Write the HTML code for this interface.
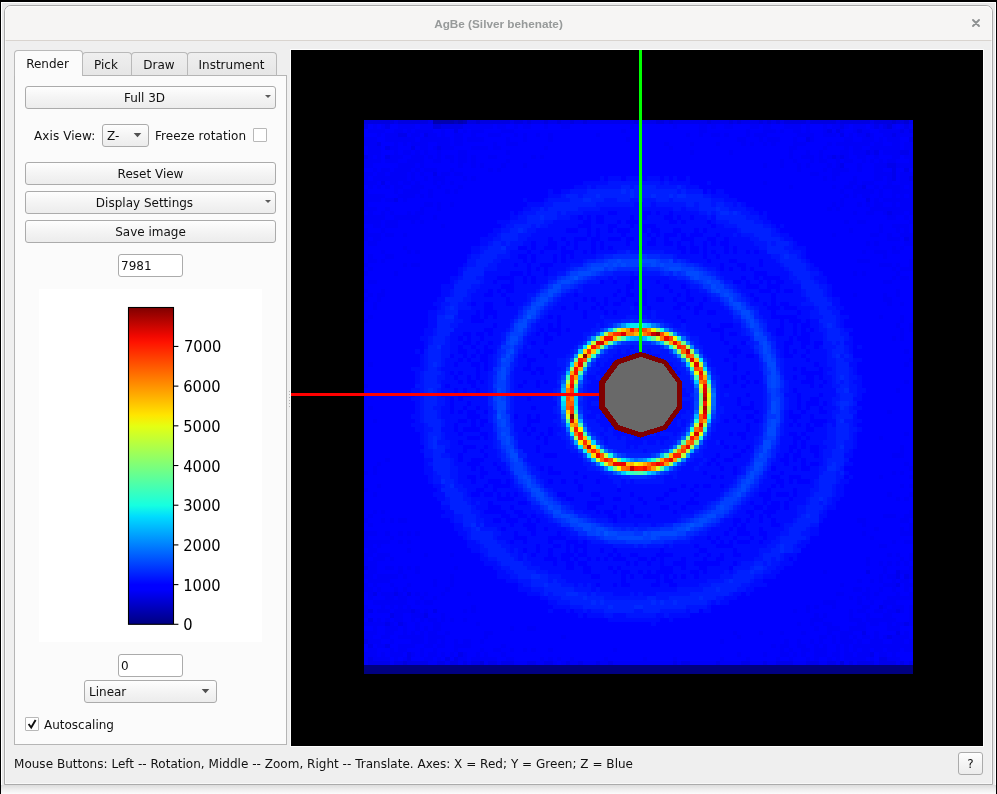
<!DOCTYPE html>
<html>
<head>
<meta charset="utf-8">
<title>AgBe (Silver behenate)</title>
<style>
html,body{margin:0;padding:0;}
body{width:997px;height:794px;position:relative;overflow:hidden;background:#f4f4f4;font-family:"DejaVu Sans","Liberation Sans",sans-serif;font-size:12px;color:#111;}
.abs{position:absolute;box-sizing:border-box;}
#desk-top{left:0;top:0;width:997px;height:2px;background:#000;}
#desk-left{left:0;top:0;width:1px;height:794px;background:#000;}
#desk-right{left:996px;top:0;width:1px;height:794px;background:#000;}
#behind{left:1px;top:2px;width:995px;height:783px;background:#e9e9e9;border:1px solid #fff;border-bottom:none;}
#shadow{left:1px;top:785px;width:995px;height:9px;background:linear-gradient(#dcdcdc,#f0f0f0 55%,#fbfbfb);}
#win{left:4px;top:5px;width:989px;height:780px;background:#efefef;border:1px solid #ababab;border-radius:7px 7px 0 0;overflow:hidden;}
#winhl{left:5px;top:6px;width:987px;height:778px;border:1px solid rgba(255,255,255,0.55);border-radius:6px 6px 0 0;}
#titlebar{left:0;top:0;width:987px;height:35px;background:#f6f5f4;border-bottom:1px solid #d9d4cf;}
#title{left:0;top:0px;width:987px;height:35px;line-height:35px;text-align:center;font-family:"Liberation Sans","DejaVu Sans",sans-serif;font-weight:bold;font-size:11.75px;color:#979a9a;}
.btn{border:1px solid #ababab;border-radius:3px;background:linear-gradient(#fefefe,#f4f4f4 50%,#ececec);text-align:center;line-height:23px;height:23px;}
.tab{border:1px solid #b9b9b9;border-bottom:none;border-radius:4px 4px 0 0;background:linear-gradient(#efefef,#e6e6e6);text-align:center;}
.edit{border:1px solid #ababab;border-radius:3px;background:#fff;line-height:23px;padding-left:2px;}

.chk{border:1px solid #b8b8b8;background:#fff;border-radius:1px;}
</style>
</head>
<body>
<div id="root" style="position:absolute;left:0;top:0;width:997px;height:794px;will-change:transform;">
<div class="abs" id="behind"></div>
<div class="abs" id="shadow"></div>
<div class="abs" id="desk-top"></div>
<div class="abs" id="desk-left"></div>
<div class="abs" id="desk-right"></div>

<div class="abs" id="win">
  <div class="abs" id="titlebar"></div>
  <div class="abs" id="title">AgBe (Silver behenate)</div>
  <svg class="abs" style="left:966px;top:12px" width="10" height="10" viewBox="0 0 10 10"><path d="M2 2L8 8M8 2L2 8" stroke="#8d9091" stroke-width="1.9" stroke-linecap="round" fill="none"/></svg>
</div>

<div class="abs" id="winhl"></div>
<!-- Left panel (page coordinates) -->
<div class="abs" id="pane" style="left:14px;top:75px;width:273px;height:670px;background:#fbfbfb;border:1px solid #b5b5b5;"></div>
<div class="abs tab" style="left:82px;top:52px;width:50px;height:24px;line-height:25px;text-indent:-2px;border-bottom:1px solid #b5b5b5;">Pick</div>
<div class="abs tab" style="left:131px;top:52px;width:57px;height:24px;line-height:25px;text-indent:-1px;border-bottom:1px solid #b5b5b5;">Draw</div>
<div class="abs tab" style="left:187px;top:52px;width:90px;height:24px;line-height:25px;text-indent:-1px;border-bottom:1px solid #b5b5b5;">Instrument</div>
<div class="abs tab" style="left:14px;top:50px;width:69px;height:26px;line-height:27px;text-indent:-2px;background:#fbfbfb;">Render</div>

<div class="abs btn" style="left:25px;top:86px;width:251px;"><span style="position:relative;left:-6px">Full 3D</span></div>
<svg class="abs" style="left:264px;top:94px" width="8" height="5"><polygon points="1,1 7,1 4,4" fill="#5a5a5a"/></svg>

<div class="abs" style="left:34px;top:128px;line-height:16px;letter-spacing:0.09px;">Axis View:</div>
<div class="abs btn" style="left:102px;top:124px;width:47px;text-align:left;padding-left:4px;">Z-</div>
<svg class="abs" style="left:132px;top:132px" width="10" height="7"><polygon points="1.7,1 9.3,1 5.5,5.2" fill="#505050"/></svg>
<div class="abs" style="left:155px;top:128px;line-height:16px;letter-spacing:0.08px;">Freeze rotation</div>
<div class="abs chk" style="left:253px;top:128px;width:14px;height:14px;"></div>

<div class="abs btn" style="left:25px;top:162px;width:251px;">Reset View</div>
<div class="abs btn" style="left:25px;top:191px;width:251px;"><span style="position:relative;left:-6px">Display Settings</span></div>
<svg class="abs" style="left:264px;top:199px" width="8" height="5"><polygon points="1,1 7,1 4,4" fill="#5a5a5a"/></svg>
<div class="abs btn" style="left:25px;top:220px;width:251px;">Save image</div>

<div class="abs edit" style="left:118px;top:254px;width:65px;height:23px;">7981</div>

<!-- colour bar canvas -->
<div class="abs" style="left:39px;top:289px;width:223px;height:353px;background:#fff;"></div>
<svg class="abs" style="left:39px;top:289px;" width="223" height="353" viewBox="0 0 223 353">
  <defs>
    <linearGradient id="jet" x1="0" y1="1" x2="0" y2="0">
      <stop offset="0" stop-color="#000080"/>
      <stop offset="0.11" stop-color="#0000ff"/>
      <stop offset="0.125" stop-color="#0000ff"/>
      <stop offset="0.34" stop-color="#00dcfe"/>
      <stop offset="0.375" stop-color="#16ffe1"/>
      <stop offset="0.5" stop-color="#7dff7a"/>
      <stop offset="0.625" stop-color="#e4ff13"/>
      <stop offset="0.66" stop-color="#ffe600"/>
      <stop offset="0.89" stop-color="#ff1300"/>
      <stop offset="0.91" stop-color="#f10800"/>
      <stop offset="1" stop-color="#800000"/>
    </linearGradient>
  </defs>
  <rect x="89.5" y="18.5" width="45" height="316.8" fill="url(#jet)" stroke="#000" stroke-width="1.1"/>
  <g stroke="#000" stroke-width="1.1">
    <line x1="135.0" x2="139.4" y1="335.30" y2="335.30"/>
    <line x1="135.0" x2="139.4" y1="295.61" y2="295.61"/>
    <line x1="135.0" x2="139.4" y1="255.91" y2="255.91"/>
    <line x1="135.0" x2="139.4" y1="216.22" y2="216.22"/>
    <line x1="135.0" x2="139.4" y1="176.52" y2="176.52"/>
    <line x1="135.0" x2="139.4" y1="136.83" y2="136.83"/>
    <line x1="135.0" x2="139.4" y1="97.13" y2="97.13"/>
    <line x1="135.0" x2="139.4" y1="57.44" y2="57.44"/>
  </g>
  <g font-family="DejaVu Sans, Liberation Sans, sans-serif" font-size="14.7" fill="#000">
    <text transform="translate(144.2 341.30) scale(1 1.12)">0</text>
    <text transform="translate(144.2 301.61) scale(1 1.12)">1000</text>
    <text transform="translate(144.2 261.91) scale(1 1.12)">2000</text>
    <text transform="translate(144.2 222.22) scale(1 1.12)">3000</text>
    <text transform="translate(144.2 182.52) scale(1 1.12)">4000</text>
    <text transform="translate(144.2 142.83) scale(1 1.12)">5000</text>
    <text transform="translate(144.2 103.13) scale(1 1.12)">6000</text>
    <text transform="translate(145.0 63.44) scale(1 1.12)">7000</text>
  </g>
</svg>

<div class="abs edit" style="left:118px;top:654px;width:65px;height:23px;">0</div>
<div class="abs btn" style="left:84px;top:680px;width:133px;text-align:left;padding-left:4px;">Linear</div>
<svg class="abs" style="left:200px;top:688px" width="10" height="7"><polygon points="1.7,1 9.3,1 5.5,5.2" fill="#505050"/></svg>
<div class="abs chk" style="left:25px;top:717px;width:14px;height:14px;"></div>
<svg class="abs" style="left:25px;top:717px" width="14" height="14" viewBox="0 0 14 14"><path d="M3.6 7.0L6.2 10.6L10.6 3.0" stroke="#111" stroke-width="1.9" fill="none"/></svg>
<div class="abs" style="left:44px;top:717px;line-height:16px;">Autoscaling</div>

<!-- splitter handle -->
<div class="abs" style="left:289px;top:391px;width:1px;height:1px;background:#b4b4b4;"></div><div class="abs" style="left:289px;top:394px;width:1px;height:1px;background:#b4b4b4;"></div><div class="abs" style="left:289px;top:397px;width:1px;height:1px;background:#b4b4b4;"></div><div class="abs" style="left:289px;top:400px;width:1px;height:1px;background:#b4b4b4;"></div><div class="abs" style="left:289px;top:403px;width:1px;height:1px;background:#b4b4b4;"></div><div class="abs" style="left:289px;top:406px;width:1px;height:1px;background:#b4b4b4;"></div>
<!-- GL view -->
<div class="abs" style="left:290px;top:49px;width:694px;height:698px;background:#fdfdfd;"></div>
<div class="abs" id="gl" style="left:291px;top:50px;width:692px;height:696px;background:#000;"></div>
<svg class="abs" id="glsvg" style="left:291px;top:50px;" width="692" height="696" viewBox="291 50 692 696">
  <!--DATA-->
<rect x="364" y="120" width="549" height="554" fill="#0000ff"/>
<g transform="translate(364 120) scale(4.289062 4.328125) translate(0 0.5)" fill="none" stroke-width="1" shape-rendering="crispEdges">
<path stroke="#000080" d="M0 126h128M0 127h128"/>
<path stroke="#0000b0" d="M16 0h5M22 0h1"/>
<path stroke="#0000bc" d="M21 0h1M23 0h1"/>
<path stroke="#0000d4" d="M26 0h1M123 0h1M126 0h1"/>
<path stroke="#0000e0" d="M0 0h7M8 0h7M24 0h2M27 0h7M35 0h2M38 0h1M42 0h1M45 0h1M48 0h1M51 0h1M63 0h1M68 0h2M71 0h1M80 0h1M85 0h1M87 0h1M92 0h1M94 0h1M96 0h1M98 0h5M104 0h6M111 0h7M119 0h4M124 0h2M16 1h2M122 1h1M9 125h1M27 125h1M111 125h1"/>
<path stroke="#0000ec" d="M7 0h1M15 0h1M34 0h1M37 0h1M39 0h3M43 0h2M46 0h2M49 0h2M52 0h11M64 0h4M70 0h1M72 0h8M81 0h4M86 0h1M88 0h4M93 0h1M95 0h1M97 0h1M103 0h1M110 0h1M118 0h1M127 0h1M0 1h1M5 1h1M18 1h5M111 1h1M119 1h1M121 1h1M126 1h1M21 2h1M108 2h1M110 2h1M115 2h1M125 2h1M127 2h1M8 3h2M14 3h1M111 3h1M117 3h1M123 3h1M103 4h1M127 4h1M3 5h1M5 6h1M11 6h1M17 6h1M117 7h1M119 7h1M125 7h2M0 8h1M5 8h1M109 8h1M111 8h1M111 10h1M122 10h2M123 11h1M126 11h1M16 12h1M123 12h1M123 13h1M127 13h1M4 14h1M116 15h1M7 18h1M117 18h1M122 21h1M126 27h1M0 103h1M117 104h1M124 104h1M124 105h1M126 105h1M124 107h1M2 109h1M7 109h1M10 109h1M120 112h1M1 113h1M11 113h1M16 113h1M124 113h1M6 114h1M14 114h1M1 115h1M5 116h1M8 116h1M126 116h1M116 118h1M124 118h1M122 119h1M0 120h1M1 121h1M5 121h1M10 123h1M22 123h1M118 123h1M1 124h1M10 124h1M19 124h1M21 124h1M120 124h2M1 125h5M7 125h2M10 125h5M17 125h2M20 125h2M23 125h1M25 125h2M29 125h2M32 125h3M38 125h2M42 125h2M47 125h1M50 125h1M54 125h1M57 125h1M72 125h1M74 125h2M82 125h1M88 125h2M93 125h1M96 125h4M103 125h3M108 125h2M113 125h1M115 125h4M120 125h4M125 125h1M127 125h1"/>
<path stroke="#0000f8" d="M2 1h1M4 1h1M8 1h4M13 1h3M23 1h7M31 1h2M35 1h1M37 1h2M42 1h1M46 1h2M62 1h1M72 1h1M78 1h2M81 1h1M84 1h2M90 1h2M93 1h2M98 1h4M103 1h1M107 1h1M109 1h2M112 1h1M114 1h3M118 1h1M120 1h1M123 1h1M125 1h1M127 1h1M1 2h4M7 2h2M10 2h1M12 2h4M18 2h1M23 2h1M25 2h3M32 2h3M60 2h1M78 2h2M89 2h1M93 2h3M97 2h1M100 2h2M103 2h1M107 2h1M111 2h1M114 2h1M116 2h2M120 2h5M126 2h1M3 3h1M5 3h3M11 3h2M15 3h2M18 3h1M21 3h2M25 3h1M29 3h3M35 3h1M37 3h1M40 3h1M43 3h1M54 3h1M75 3h1M78 3h1M81 3h2M84 3h1M89 3h1M91 3h3M101 3h4M107 3h3M113 3h1M115 3h2M118 3h1M121 3h2M124 3h4M0 4h3M5 4h7M13 4h7M21 4h2M24 4h4M33 4h1M37 4h1M43 4h1M61 4h1M87 4h2M92 4h1M94 4h3M100 4h1M104 4h1M112 4h2M116 4h3M120 4h1M122 4h3M0 5h3M7 5h1M9 5h1M11 5h4M17 5h3M21 5h2M30 5h1M33 5h3M70 5h1M76 5h1M82 5h1M88 5h1M90 5h1M93 5h1M95 5h1M100 5h3M108 5h1M110 5h8M119 5h2M123 5h2M126 5h2M1 6h3M6 6h2M13 6h2M16 6h1M18 6h3M25 6h4M30 6h2M42 6h1M71 6h1M99 6h2M107 6h1M112 6h1M114 6h2M118 6h7M126 6h2M1 7h3M7 7h1M9 7h2M12 7h1M14 7h1M17 7h1M22 7h2M33 7h1M76 7h1M85 7h1M99 7h1M103 7h1M106 7h1M111 7h2M114 7h3M118 7h1M121 7h4M127 7h1M1 8h1M3 8h1M6 8h3M11 8h3M15 8h1M17 8h1M19 8h2M22 8h2M25 8h1M29 8h2M39 8h1M41 8h1M99 8h1M102 8h3M106 8h1M108 8h1M110 8h1M112 8h1M115 8h2M119 8h1M123 8h2M126 8h2M0 9h4M5 9h3M10 9h4M16 9h2M20 9h1M22 9h2M25 9h1M33 9h1M97 9h1M100 9h1M104 9h1M106 9h2M110 9h1M112 9h2M116 9h1M118 9h1M120 9h1M122 9h2M127 9h1M0 10h2M8 10h4M13 10h1M22 10h1M25 10h1M27 10h1M32 10h1M37 10h1M93 10h1M97 10h1M101 10h1M103 10h1M108 10h1M110 10h1M115 10h1M119 10h3M124 10h4M2 11h1M4 11h2M7 11h4M12 11h1M14 11h3M20 11h1M29 11h1M31 11h1M101 11h1M107 11h1M109 11h4M115 11h1M119 11h2M0 12h2M3 12h2M6 12h4M11 12h1M13 12h1M18 12h2M21 12h2M104 12h2M109 12h2M119 12h4M125 12h3M0 13h1M2 13h8M11 13h1M14 13h1M16 13h3M23 13h1M25 13h1M107 13h1M109 13h1M114 13h1M119 13h2M122 13h1M125 13h2M0 14h3M6 14h2M9 14h2M12 14h1M16 14h1M18 14h1M20 14h1M93 14h1M113 14h2M116 14h3M122 14h1M125 14h3M1 15h1M3 15h1M5 15h1M7 15h2M11 15h3M17 15h1M22 15h1M99 15h1M109 15h1M112 15h2M115 15h1M119 15h1M121 15h5M127 15h1M0 16h1M7 16h1M9 16h4M15 16h1M19 16h1M21 16h1M111 16h1M114 16h5M120 16h1M123 16h5M0 17h5M8 17h4M13 17h1M15 17h1M112 17h1M114 17h1M116 17h2M120 17h1M123 17h1M125 17h1M127 17h1M0 18h4M5 18h2M9 18h1M111 18h1M119 18h1M121 18h7M0 19h1M14 19h2M17 19h1M20 19h1M109 19h1M111 19h1M115 19h1M117 19h1M119 19h2M123 19h1M125 19h3M0 20h3M5 20h1M13 20h1M17 20h1M108 20h1M110 20h1M118 20h10M1 21h1M4 21h1M6 21h1M10 21h1M12 21h2M114 21h1M117 21h2M121 21h1M123 21h3M127 21h1M0 22h5M7 22h6M16 22h1M122 22h2M126 22h1M0 23h4M5 23h3M11 23h1M13 23h1M112 23h1M115 23h2M127 23h1M2 24h2M5 24h3M18 24h1M120 24h1M123 24h4M0 25h1M4 25h1M113 25h1M120 25h1M124 25h1M126 25h1M0 26h4M5 26h2M9 26h1M109 26h1M118 26h2M122 26h1M125 26h3M0 27h1M2 27h2M122 27h3M127 27h1M1 28h2M117 28h1M119 28h1M126 28h2M9 29h1M123 29h1M125 29h1M4 30h1M10 30h1M12 30h1M116 30h1M119 30h3M123 30h2M1 31h1M5 31h2M121 31h1M1 32h2M4 32h1M115 32h3M127 32h1M0 33h1M9 33h1M11 33h2M120 33h3M124 33h1M127 33h1M1 34h1M123 34h1M125 34h3M0 35h1M7 35h1M114 35h1M116 35h1M124 35h1M123 36h1M125 36h2M1 37h2M121 37h2M0 39h1M4 39h1M124 39h1M1 40h1M3 40h2M114 40h1M121 40h1M124 40h1M0 41h1M3 41h1M121 41h2M2 42h1M122 42h1M125 42h1M2 43h1M1 45h1M120 45h1M125 45h1M0 46h1M125 46h1M124 47h1M127 47h1M125 48h1M127 48h1M125 49h1M123 50h1M125 50h1M126 53h1M127 55h1M1 56h1M126 56h1M126 60h1M0 61h1M124 62h1M1 66h1M122 67h1M2 69h1M126 72h1M120 73h1M125 75h1M125 76h1M123 77h3M5 78h1M3 79h1M126 79h1M2 80h1M127 80h1M0 81h1M2 81h1M123 81h1M125 81h1M120 82h1M127 82h1M3 84h1M125 84h1M127 84h1M0 85h1M2 86h1M122 86h1M127 86h1M124 87h1M126 87h1M2 90h1M4 90h1M127 90h1M1 91h1M121 91h3M126 91h2M0 92h1M4 92h1M6 92h1M8 92h2M115 92h2M125 92h2M1 93h1M116 93h1M127 93h1M119 94h1M125 94h1M127 94h1M0 95h3M5 95h1M8 95h1M10 95h1M12 95h1M116 95h1M125 95h3M0 96h1M6 96h1M118 96h1M0 97h6M8 97h1M10 97h1M123 97h1M126 97h2M0 98h2M3 98h1M120 98h2M1 99h2M10 99h1M0 100h2M3 100h3M14 100h1M20 100h1M122 100h1M124 100h1M127 100h1M0 101h1M2 101h3M6 101h1M117 101h1M125 101h1M127 101h1M0 102h3M117 102h1M120 102h1M122 102h1M124 102h1M126 102h1M1 103h2M5 103h2M8 103h1M10 103h1M12 103h1M21 103h1M121 103h1M127 103h1M1 104h2M8 104h1M12 104h1M107 104h1M121 104h1M125 104h3M0 105h2M3 105h5M9 105h1M20 105h1M120 105h1M122 105h2M127 105h1M1 106h5M16 106h1M20 106h1M115 106h1M118 106h1M120 106h1M123 106h1M125 106h2M0 107h1M2 107h1M6 107h1M10 107h1M16 107h1M20 107h1M111 107h1M121 107h3M126 107h2M0 108h2M3 108h1M7 108h1M9 108h1M19 108h1M114 108h2M117 108h1M120 108h1M123 108h1M126 108h1M1 109h1M4 109h3M8 109h1M12 109h1M14 109h1M18 109h1M24 109h1M110 109h2M116 109h2M119 109h1M124 109h1M127 109h1M1 110h1M5 110h2M8 110h2M13 110h1M16 110h1M113 110h1M115 110h1M117 110h1M122 110h6M2 111h8M12 111h1M14 111h2M107 111h3M115 111h1M118 111h1M121 111h3M0 112h1M4 112h1M6 112h1M8 112h1M10 112h1M25 112h1M103 112h1M105 112h1M109 112h1M116 112h2M121 112h1M123 112h3M127 112h1M0 113h1M3 113h3M7 113h4M12 113h1M14 113h1M23 113h1M25 113h1M100 113h1M103 113h1M113 113h1M115 113h2M119 113h2M122 113h2M125 113h1M127 113h1M0 114h1M7 114h2M11 114h3M18 114h1M105 114h1M107 114h1M113 114h1M117 114h1M121 114h2M127 114h1M3 115h1M5 115h1M7 115h2M11 115h1M13 115h1M15 115h2M18 115h1M20 115h1M23 115h1M104 115h3M113 115h3M117 115h7M127 115h1M0 116h5M6 116h1M9 116h1M12 116h1M16 116h2M26 116h1M101 116h1M104 116h1M107 116h2M115 116h2M118 116h2M122 116h1M124 116h2M127 116h1M2 117h1M5 117h3M9 117h1M12 117h1M14 117h1M16 117h2M34 117h1M38 117h2M105 117h1M108 117h3M113 117h4M122 117h3M0 118h3M5 118h2M9 118h1M11 118h1M13 118h1M15 118h2M19 118h1M28 118h2M86 118h1M92 118h1M97 118h1M102 118h1M108 118h1M111 118h3M119 118h1M126 118h1M0 119h2M4 119h2M8 119h6M15 119h4M28 119h1M46 119h1M87 119h1M106 119h2M109 119h1M111 119h2M114 119h1M116 119h2M119 119h1M121 119h1M123 119h4M1 120h3M6 120h1M11 120h3M15 120h2M18 120h1M21 120h1M23 120h2M27 120h1M83 120h1M98 120h1M101 120h1M104 120h1M106 120h1M109 120h1M111 120h3M115 120h1M118 120h3M123 120h3M127 120h1M3 121h2M8 121h4M14 121h2M17 121h2M21 121h4M32 121h1M95 121h1M97 121h2M101 121h2M105 121h1M107 121h1M110 121h1M112 121h1M114 121h14M1 122h2M6 122h1M8 122h2M13 122h1M16 122h1M21 122h1M27 122h1M30 122h2M34 122h1M37 122h1M39 122h1M43 122h1M58 122h1M97 122h1M99 122h1M102 122h2M105 122h3M110 122h1M112 122h1M114 122h1M116 122h2M119 122h2M122 122h3M126 122h2M0 123h3M4 123h1M6 123h3M11 123h1M13 123h1M15 123h2M18 123h1M20 123h1M23 123h1M26 123h1M28 123h1M32 123h1M87 123h1M93 123h1M97 123h2M100 123h1M102 123h1M105 123h3M109 123h2M112 123h2M115 123h3M120 123h2M123 123h1M0 124h1M2 124h4M7 124h1M9 124h1M14 124h2M17 124h1M22 124h2M25 124h6M33 124h2M41 124h1M43 124h1M45 124h1M48 124h1M56 124h1M65 124h1M72 124h1M83 124h1M89 124h1M96 124h1M99 124h1M103 124h1M105 124h1M108 124h1M110 124h1M112 124h5M118 124h1M122 124h3M0 125h1M6 125h1M15 125h2M19 125h1M22 125h1M24 125h1M28 125h1M31 125h1M35 125h3M40 125h2M44 125h1M46 125h1M48 125h2M51 125h3M55 125h2M58 125h14M73 125h1M76 125h6M83 125h5M90 125h3M94 125h2M100 125h3M106 125h2M110 125h1M112 125h1M114 125h1M119 125h1M124 125h1M126 125h1"/>
<path stroke="#000bff" d="M55 13h1M57 13h3M61 13h4M66 13h3M70 13h1M72 13h1M75 13h1M51 14h6M69 14h1M71 14h5M80 14h1M49 15h3M53 15h1M75 15h3M43 16h1M46 16h2M80 16h1M82 16h2M43 17h3M81 17h4M37 18h1M42 18h1M84 18h3M38 19h4M63 19h2M67 19h1M86 19h1M88 19h1M37 20h2M55 20h17M74 20h1M89 20h2M34 21h1M36 21h1M51 21h6M59 21h6M67 21h1M69 21h2M72 21h6M90 21h2M93 21h1M34 22h2M48 22h2M51 22h1M53 22h1M56 22h6M63 22h2M66 22h4M72 22h1M74 22h2M77 22h3M81 22h1M92 22h2M31 23h3M44 23h7M53 23h1M56 23h3M60 23h1M64 23h7M73 23h1M75 23h5M81 23h1M93 23h2M32 24h1M43 24h7M53 24h4M59 24h3M63 24h2M68 24h13M82 24h2M95 24h1M97 24h1M30 25h2M40 25h7M50 25h2M53 25h1M55 25h2M58 25h1M62 25h3M66 25h1M69 25h3M74 25h3M78 25h1M80 25h7M96 25h1M29 26h2M39 26h13M53 26h1M55 26h5M61 26h5M67 26h1M69 26h1M73 26h1M75 26h1M79 26h3M83 26h3M87 26h1M97 26h2M27 27h3M38 27h5M44 27h2M47 27h2M52 27h1M55 27h2M60 27h1M63 27h4M68 27h2M71 27h3M77 27h3M82 27h2M85 27h5M98 27h2M27 28h2M37 28h2M40 28h3M45 28h2M48 28h1M50 28h3M54 28h1M56 28h5M62 28h4M68 28h2M72 28h1M74 28h2M77 28h2M80 28h1M82 28h1M85 28h6M100 28h1M25 29h2M38 29h1M40 29h2M45 29h1M47 29h2M50 29h3M54 29h1M56 29h1M58 29h6M65 29h8M75 29h1M78 29h1M80 29h4M85 29h1M87 29h5M100 29h3M25 30h2M34 30h4M39 30h2M42 30h4M49 30h2M52 30h1M54 30h5M70 30h4M75 30h1M78 30h1M80 30h1M82 30h2M85 30h1M87 30h2M90 30h1M92 30h2M102 30h1M24 31h1M34 31h2M38 31h1M40 31h4M45 31h1M47 31h1M49 31h5M73 31h6M80 31h2M83 31h12M102 31h1M32 32h5M38 32h1M40 32h4M45 32h1M47 32h4M76 32h4M81 32h4M87 32h5M93 32h3M103 32h1M23 33h1M31 33h4M36 33h2M39 33h2M44 33h4M79 33h4M84 33h3M89 33h3M93 33h4M104 33h1M22 34h1M31 34h7M39 34h1M41 34h1M43 34h4M82 34h1M84 34h1M86 34h2M89 34h1M91 34h7M104 34h2M22 35h1M28 35h6M37 35h1M39 35h3M43 35h2M62 35h1M64 35h1M83 35h8M94 35h5M106 35h1M20 36h2M28 36h3M35 36h2M38 36h1M40 36h3M57 36h1M59 36h3M64 36h7M84 36h4M89 36h2M92 36h1M97 36h2M105 36h3M20 37h1M28 37h2M31 37h3M35 37h2M38 37h1M40 37h3M56 37h2M59 37h3M63 37h5M69 37h6M88 37h1M90 37h2M93 37h1M95 37h1M98 37h2M106 37h2M18 38h3M27 38h5M35 38h6M51 38h10M63 38h7M71 38h3M75 38h1M87 38h2M92 38h2M97 38h5M108 38h1M18 39h2M26 39h3M30 39h1M32 39h1M35 39h5M49 39h1M51 39h8M60 39h1M62 39h3M66 39h5M72 39h3M76 39h2M88 39h4M95 39h1M97 39h1M100 39h2M108 39h1M18 40h2M25 40h3M30 40h2M33 40h5M47 40h2M50 40h8M59 40h2M63 40h2M66 40h7M74 40h1M76 40h4M89 40h1M91 40h4M96 40h6M108 40h1M17 41h2M25 41h8M34 41h4M46 41h5M52 41h1M54 41h2M57 41h3M61 41h4M66 41h2M70 41h2M73 41h2M77 41h2M80 41h1M90 41h1M92 41h3M96 41h7M109 41h2M16 42h2M24 42h1M26 42h2M30 42h3M35 42h2M45 42h4M50 42h4M55 42h1M57 42h1M60 42h3M64 42h1M66 42h7M75 42h3M79 42h4M90 42h3M94 42h1M96 42h1M99 42h3M109 42h2M17 43h1M25 43h3M30 43h6M44 43h2M47 43h2M50 43h3M54 43h1M56 43h6M63 43h3M67 43h5M74 43h1M76 43h1M79 43h5M92 43h2M97 43h1M101 43h4M110 43h2M15 44h2M22 44h4M27 44h1M31 44h5M43 44h8M52 44h4M57 44h1M59 44h8M68 44h9M78 44h2M82 44h3M92 44h3M96 44h5M102 44h2M15 45h2M22 45h3M27 45h1M29 45h1M31 45h4M42 45h1M44 45h1M46 45h5M52 45h3M56 45h5M64 45h1M66 45h1M68 45h5M74 45h12M93 45h2M101 45h3M111 45h2M15 46h2M23 46h2M28 46h6M41 46h4M46 46h10M70 46h4M75 46h11M94 46h3M98 46h1M102 46h1M104 46h2M111 46h1M15 47h2M22 47h8M31 47h3M40 47h3M44 47h1M46 47h8M55 47h1M72 47h2M75 47h5M81 47h2M86 47h2M94 47h3M98 47h2M101 47h1M104 47h2M111 47h1M14 48h2M21 48h7M30 48h3M40 48h1M42 48h1M46 48h1M48 48h5M75 48h6M84 48h4M94 48h2M98 48h2M101 48h1M103 48h1M105 48h1M112 48h2M14 49h2M20 49h3M25 49h1M28 49h1M30 49h2M39 49h1M41 49h1M43 49h2M46 49h5M76 49h7M84 49h1M87 49h1M95 49h1M98 49h2M101 49h1M104 49h3M13 50h2M20 50h2M23 50h1M25 50h2M28 50h4M38 50h4M44 50h7M78 50h5M84 50h6M96 50h3M100 50h1M104 50h3M113 50h1M14 51h1M20 51h3M25 51h1M27 51h2M30 51h2M38 51h1M40 51h2M43 51h7M78 51h6M85 51h3M96 51h2M100 51h2M104 51h1M112 51h2M14 52h1M20 52h2M23 52h2M26 52h2M29 52h2M37 52h1M39 52h10M62 52h1M79 52h7M87 52h3M96 52h2M99 52h3M103 52h2M106 52h1M113 52h1M115 52h1M12 53h1M20 53h2M24 53h2M27 53h1M30 53h1M37 53h4M42 53h6M59 53h1M61 53h1M64 53h1M66 53h1M79 53h6M88 53h3M97 53h1M99 53h1M101 53h2M104 53h4M113 53h1M13 54h1M21 54h2M24 54h1M26 54h1M29 54h1M36 54h1M38 54h4M43 54h4M58 54h7M66 54h3M80 54h6M87 54h2M91 54h1M97 54h1M100 54h2M103 54h5M13 55h1M19 55h3M23 55h1M25 55h2M29 55h1M36 55h2M40 55h5M57 55h10M68 55h2M81 55h3M85 55h7M98 55h5M104 55h4M114 55h2M13 56h1M19 56h2M22 56h3M27 56h1M29 56h1M36 56h2M39 56h6M54 56h1M56 56h2M59 56h13M81 56h5M87 56h5M98 56h7M106 56h2M113 56h2M11 57h3M18 57h8M27 57h1M29 57h1M35 57h2M39 57h1M42 57h4M55 57h2M58 57h5M64 57h9M82 57h4M87 57h5M98 57h2M101 57h1M103 57h3M107 57h2M114 57h1M12 58h1M19 58h1M21 58h1M23 58h3M27 58h2M35 58h4M40 58h1M42 58h3M54 58h7M62 58h3M66 58h4M73 58h1M82 58h7M90 58h3M98 58h4M107 58h1M114 58h1M12 59h1M19 59h2M22 59h2M25 59h1M27 59h2M35 59h10M52 59h2M55 59h4M60 59h9M70 59h3M83 59h3M87 59h1M89 59h4M98 59h2M101 59h2M105 59h1M107 59h2M115 59h1M12 60h1M18 60h4M23 60h1M26 60h1M28 60h1M35 60h2M38 60h2M41 60h1M43 60h2M53 60h3M57 60h2M60 60h14M83 60h3M87 60h2M90 60h1M92 60h1M99 60h3M105 60h2M108 60h1M114 60h2M18 61h1M20 61h5M26 61h3M35 61h1M37 61h3M41 61h4M52 61h7M60 61h2M64 61h1M68 61h4M73 61h1M83 61h1M85 61h3M89 61h4M99 61h5M105 61h1M107 61h2M115 61h1M11 62h2M18 62h3M22 62h1M24 62h2M27 62h2M35 62h9M52 62h4M57 62h8M66 62h4M71 62h1M73 62h2M83 62h10M99 62h1M101 62h9M115 62h2M12 63h1M18 63h4M25 63h4M35 63h9M54 63h11M67 63h9M83 63h1M85 63h4M90 63h3M98 63h3M102 63h4M107 63h3M115 63h1M11 64h2M19 64h1M21 64h1M23 64h6M35 64h3M39 64h5M52 64h6M59 64h3M63 64h3M67 64h5M73 64h1M83 64h4M88 64h5M99 64h2M102 64h2M106 64h3M114 64h2M12 65h1M19 65h1M21 65h3M25 65h4M35 65h10M52 65h1M55 65h3M59 65h2M63 65h1M65 65h1M68 65h8M83 65h4M88 65h2M91 65h2M99 65h2M102 65h1M106 65h1M108 65h1M12 66h1M18 66h2M21 66h2M24 66h2M27 66h2M35 66h4M40 66h4M52 66h6M59 66h17M84 66h4M91 66h2M99 66h2M102 66h1M104 66h2M107 66h3M114 66h2M12 67h1M18 67h2M21 67h1M23 67h1M26 67h2M35 67h9M53 67h3M57 67h3M62 67h2M65 67h2M68 67h7M84 67h7M92 67h1M98 67h1M100 67h2M103 67h3M108 67h1M11 68h2M18 68h6M27 68h2M36 68h2M39 68h1M41 68h4M52 68h2M55 68h3M59 68h15M83 68h3M87 68h2M91 68h2M98 68h1M102 68h2M105 68h4M114 68h1M12 69h1M19 69h3M24 69h1M26 69h1M35 69h3M41 69h3M54 69h10M66 69h4M71 69h2M74 69h1M83 69h1M85 69h2M88 69h3M92 69h1M98 69h2M101 69h3M108 69h2M114 69h2M11 70h3M19 70h2M22 70h3M26 70h1M28 70h2M35 70h3M39 70h6M55 70h6M62 70h11M74 70h1M82 70h7M90 70h2M98 70h1M100 70h1M102 70h1M104 70h1M107 70h1M109 70h1M114 70h1M12 71h2M18 71h3M22 71h1M27 71h3M35 71h2M38 71h1M40 71h3M44 71h2M56 71h1M58 71h4M63 71h1M65 71h9M82 71h7M90 71h2M98 71h5M105 71h3M115 71h1M13 72h1M19 72h3M23 72h4M29 72h1M36 72h2M39 72h2M42 72h1M44 72h1M55 72h1M58 72h8M68 72h1M72 72h1M81 72h4M86 72h1M89 72h3M98 72h1M101 72h1M103 72h5M114 72h1M13 73h1M19 73h5M27 73h1M29 73h1M36 73h4M41 73h1M43 73h3M56 73h1M59 73h1M61 73h1M63 73h8M81 73h7M89 73h2M97 73h3M102 73h1M104 73h4M114 73h1M13 74h1M20 74h2M23 74h7M36 74h6M43 74h4M56 74h1M61 74h4M66 74h2M69 74h1M80 74h2M84 74h7M97 74h3M101 74h1M103 74h4M114 74h1M20 75h3M26 75h2M29 75h1M36 75h4M41 75h6M61 75h1M63 75h1M80 75h4M85 75h1M87 75h2M90 75h1M97 75h2M101 75h1M103 75h1M106 75h2M114 75h1M13 76h1M19 76h4M24 76h3M28 76h3M37 76h3M41 76h7M65 76h1M79 76h9M89 76h2M97 76h2M100 76h1M102 76h2M106 76h1M113 76h1M20 77h2M23 77h5M29 77h2M38 77h4M45 77h5M79 77h3M83 77h3M88 77h2M96 77h2M99 77h1M102 77h3M106 77h1M112 77h2M14 78h2M21 78h1M23 78h2M28 78h4M38 78h13M77 78h2M80 78h1M82 78h2M86 78h4M96 78h1M99 78h1M101 78h1M103 78h4M14 79h1M21 79h3M27 79h3M31 79h2M39 79h12M75 79h3M79 79h1M81 79h1M83 79h6M95 79h3M99 79h3M103 79h1M106 79h1M112 79h2M14 80h2M22 80h3M26 80h1M28 80h3M32 80h1M40 80h1M42 80h1M44 80h8M74 80h3M78 80h5M84 80h2M87 80h1M96 80h4M101 80h1M104 80h2M14 81h2M22 81h5M29 81h3M33 81h1M41 81h2M46 81h3M50 81h5M73 81h6M80 81h6M87 81h1M94 81h3M98 81h8M112 81h1M15 82h1M22 82h2M26 82h1M28 82h6M41 82h10M52 82h5M70 82h2M73 82h8M82 82h1M84 82h3M94 82h1M97 82h2M102 82h4M113 82h1M15 83h1M22 83h3M26 83h3M32 83h1M34 83h1M42 83h1M44 83h2M47 83h2M50 83h4M55 83h3M60 83h1M62 83h1M70 83h16M93 83h3M98 83h1M100 83h1M104 83h1M111 83h2M16 84h2M23 84h5M29 84h1M34 84h1M42 84h8M51 84h8M60 84h14M75 84h2M78 84h1M81 84h2M84 84h1M92 84h3M96 84h1M98 84h7M110 84h2M17 85h1M24 85h2M28 85h2M31 85h5M44 85h6M51 85h8M60 85h11M73 85h3M77 85h7M92 85h2M95 85h5M101 85h3M110 85h2M16 86h3M24 86h1M27 86h1M30 86h1M32 86h1M34 86h1M36 86h1M47 86h6M55 86h7M63 86h7M71 86h6M78 86h5M91 86h1M95 86h1M99 86h1M101 86h3M110 86h2M17 87h2M25 87h6M35 87h3M46 87h1M49 87h6M56 87h2M60 87h4M65 87h3M70 87h6M77 87h5M90 87h3M95 87h4M100 87h3M109 87h2M25 88h1M27 88h2M30 88h6M38 88h1M48 88h4M56 88h9M66 88h6M73 88h2M78 88h2M89 88h1M91 88h2M94 88h1M97 88h1M99 88h4M109 88h1M18 89h2M26 89h3M32 89h2M35 89h4M49 89h3M54 89h4M59 89h3M63 89h6M71 89h3M75 89h4M88 89h3M93 89h1M97 89h1M99 89h2M108 89h2M19 90h2M27 90h1M33 90h2M37 90h3M51 90h3M55 90h1M58 90h2M61 90h1M63 90h9M73 90h4M87 90h2M91 90h2M96 90h5M107 90h1M18 91h3M27 91h5M34 91h2M38 91h1M40 91h2M53 91h4M59 91h1M61 91h2M65 91h1M67 91h7M86 91h4M91 91h1M93 91h1M95 91h6M106 91h2M20 92h1M28 92h2M32 92h1M36 92h2M39 92h1M41 92h2M57 92h1M59 92h14M84 92h2M88 92h1M90 92h2M93 92h2M96 92h4M106 92h1M21 93h2M28 93h6M35 93h2M40 93h5M63 93h1M67 93h1M83 93h3M87 93h1M89 93h6M97 93h1M21 94h2M31 94h1M33 94h5M40 94h2M43 94h4M81 94h4M86 94h1M89 94h3M93 94h5M104 94h2M22 95h2M32 95h3M36 95h3M40 95h5M46 95h2M80 95h4M85 95h2M90 95h2M94 95h3M104 95h2M23 96h1M31 96h4M38 96h5M47 96h3M77 96h3M81 96h1M83 96h3M87 96h3M91 96h2M94 96h2M24 97h2M33 97h1M35 97h2M38 97h5M44 97h3M50 97h1M52 97h1M76 97h5M82 97h1M84 97h1M86 97h1M90 97h2M93 97h2M102 97h2M24 98h3M34 98h6M41 98h3M46 98h1M48 98h1M52 98h6M70 98h1M72 98h5M78 98h4M86 98h8M101 98h2M25 99h2M34 99h1M36 99h1M38 99h2M41 99h2M44 99h3M48 99h1M50 99h1M52 99h3M56 99h2M59 99h10M70 99h8M80 99h6M87 99h5M27 100h1M36 100h1M38 100h1M40 100h3M44 100h2M49 100h1M52 100h5M58 100h1M60 100h2M64 100h4M72 100h5M78 100h2M81 100h2M84 100h2M88 100h4M98 100h3M27 101h2M36 101h1M38 101h4M45 101h1M48 101h1M50 101h2M53 101h1M55 101h1M57 101h1M61 101h3M66 101h1M68 101h1M70 101h4M75 101h4M80 101h2M84 101h7M98 101h1M100 101h1M28 102h3M39 102h5M45 102h2M49 102h1M52 102h9M62 102h1M64 102h2M67 102h2M70 102h2M75 102h2M83 102h3M87 102h1M97 102h3M30 103h2M41 103h6M49 103h2M53 103h4M58 103h1M60 103h9M72 103h2M75 103h3M80 103h5M96 103h2M31 104h2M43 104h8M53 104h5M59 104h1M62 104h2M65 104h1M67 104h1M72 104h4M78 104h1M80 104h4M85 104h1M95 104h2M31 105h3M46 105h7M55 105h5M61 105h1M63 105h2M69 105h1M71 105h1M73 105h1M75 105h2M78 105h5M93 105h3M33 106h3M47 106h13M61 106h7M69 106h1M72 106h8M91 106h2M36 107h1M49 107h1M51 107h1M53 107h1M55 107h3M59 107h1M62 107h5M69 107h2M73 107h5M90 107h4M36 108h3M53 108h1M55 108h18M89 108h2M38 109h3M58 109h4M63 109h1M65 109h3M86 109h2M89 109h1M41 110h2M84 110h3M43 111h2M81 111h1M83 111h2M44 112h4M80 112h1M43 113h1M47 113h1M49 113h2M52 113h1M75 113h1M79 113h2M50 114h1M52 114h4M58 114h3M68 114h2M71 114h5M57 115h12M71 115h1M67 116h1"/>
<path stroke="#0015ff" d="M57 14h12M70 14h1M52 15h1M54 15h6M62 15h1M68 15h5M74 15h1M48 16h4M73 16h1M75 16h4M46 17h1M50 17h1M79 17h2M43 18h5M56 18h3M62 18h2M65 18h3M71 18h1M81 18h3M42 19h2M54 19h9M65 19h2M68 19h7M77 19h1M81 19h1M84 19h2M87 19h1M39 20h2M42 20h1M50 20h5M72 20h2M75 20h3M85 20h4M37 21h3M45 21h1M47 21h4M78 21h2M81 21h1M88 21h2M36 22h2M45 22h3M80 22h1M89 22h3M34 23h4M42 23h2M82 23h3M91 23h2M33 24h2M39 24h1M41 24h2M84 24h3M93 24h2M32 25h2M38 25h2M87 25h1M95 25h1M31 26h1M36 26h3M86 26h1M88 26h3M95 26h2M30 27h2M36 27h2M90 27h2M97 27h1M29 28h1M32 28h1M34 28h3M91 28h3M95 28h1M99 28h1M27 29h2M33 29h3M92 29h2M98 29h2M27 30h1M33 30h1M59 30h2M62 30h8M99 30h3M25 31h2M31 31h3M54 31h2M72 31h1M95 31h2M101 31h1M24 32h2M30 32h2M51 32h1M75 32h1M96 32h1M102 32h1M24 33h2M29 33h2M48 33h3M78 33h1M97 33h1M103 33h1M23 34h1M28 34h3M47 34h1M80 34h2M98 34h1M103 34h1M45 35h2M58 35h4M63 35h1M65 35h4M82 35h1M99 35h1M104 35h2M22 36h1M26 36h2M43 36h2M54 36h3M58 36h1M71 36h2M83 36h1M99 36h2M104 36h1M21 37h1M27 37h1M52 37h3M75 37h1M84 37h2M100 37h2M105 37h1M25 38h2M41 38h1M50 38h1M76 38h2M86 38h1M106 38h2M20 39h1M24 39h2M40 39h1M48 39h1M50 39h1M78 39h2M87 39h1M102 39h1M107 39h1M20 40h1M24 40h1M38 40h2M46 40h1M80 40h1M88 40h1M102 40h1M107 40h1M23 41h2M38 41h1M45 41h1M81 41h2M89 41h1M103 41h1M108 41h1M18 42h2M22 42h2M37 42h1M44 42h1M83 42h1M102 42h3M18 43h1M22 43h3M36 43h1M43 43h1M62 43h1M84 43h1M91 43h1M105 43h1M108 43h2M17 44h2M42 44h1M67 44h1M85 44h1M104 44h2M109 44h2M21 45h1M35 45h1M41 45h1M55 45h1M61 45h3M65 45h1M67 45h1M92 45h1M104 45h3M110 45h1M21 46h2M34 46h1M40 46h1M56 46h4M67 46h3M86 46h2M93 46h1M110 46h1M20 47h2M39 47h1M54 47h1M56 47h1M71 47h1M74 47h1M106 47h1M110 47h1M16 48h1M33 48h1M39 48h1M53 48h2M73 48h2M88 48h1M106 48h2M111 48h1M16 49h1M32 49h1M38 49h1M51 49h2M75 49h1M88 49h1M107 49h1M111 49h2M15 50h1M19 50h1M32 50h1M37 50h1M51 50h1M76 50h2M95 50h1M107 50h1M112 50h1M15 51h1M19 51h1M37 51h1M50 51h1M77 51h1M89 51h2M107 51h2M110 51h1M18 52h2M31 52h1M38 52h1M49 52h1M59 52h3M63 52h6M78 52h1M90 52h1M107 52h3M112 52h1M14 53h1M18 53h2M36 53h1M48 53h1M57 53h2M60 53h1M62 53h2M65 53h1M67 53h4M96 53h1M108 53h1M112 53h1M14 54h1M18 54h2M30 54h1M47 54h1M56 54h2M65 54h1M69 54h3M79 54h1M96 54h1M108 54h1M111 54h1M113 54h1M14 55h1M18 55h1M30 55h1M35 55h1M45 55h2M54 55h3M67 55h1M70 55h3M80 55h1M97 55h1M108 55h2M112 55h2M14 56h1M18 56h1M30 56h1M35 56h1M45 56h2M55 56h1M58 56h1M72 56h2M80 56h1M92 56h1M97 56h1M108 56h2M14 57h1M17 57h1M46 57h1M53 57h2M57 57h1M63 57h1M73 57h2M81 57h1M92 57h1M97 57h1M109 57h1M113 57h1M13 58h1M18 58h1M29 58h1M34 58h1M45 58h1M52 58h2M61 58h1M65 58h1M70 58h3M74 58h1M81 58h1M97 58h1M108 58h2M113 58h1M13 59h1M17 59h2M29 59h1M34 59h1M45 59h1M54 59h1M59 59h1M69 59h1M73 59h3M82 59h1M109 59h1M113 59h2M13 60h1M17 60h1M29 60h1M34 60h1M52 60h1M56 60h1M59 60h1M74 60h2M82 60h1M98 60h1M109 60h1M111 60h1M113 60h1M12 61h2M29 61h1M34 61h1M45 61h1M51 61h1M59 61h1M62 61h2M65 61h3M72 61h1M74 61h3M82 61h1M93 61h1M98 61h1M109 61h2M113 61h2M13 62h1M17 62h1M29 62h1M34 62h1M44 62h1M51 62h1M56 62h1M65 62h1M70 62h1M72 62h1M75 62h2M82 62h1M93 62h1M98 62h1M113 62h2M13 63h1M17 63h1M34 63h1M44 63h1M51 63h3M65 63h2M82 63h1M84 63h1M93 63h1M110 63h1M114 63h1M13 64h1M17 64h2M34 64h1M44 64h1M51 64h1M58 64h1M62 64h1M66 64h1M72 64h1M74 64h3M82 64h1M93 64h1M98 64h1M109 64h2M13 65h1M17 65h2M34 65h1M51 65h1M53 65h2M58 65h1M61 65h2M64 65h1M66 65h2M76 65h1M82 65h1M93 65h1M98 65h1M109 65h1M114 65h1M13 66h1M16 66h2M29 66h1M34 66h1M44 66h1M51 66h1M58 66h1M76 66h1M82 66h2M93 66h1M98 66h1M110 66h1M113 66h1M13 67h1M17 67h1M29 67h1M34 67h1M44 67h1M51 67h2M56 67h1M60 67h2M64 67h1M67 67h1M75 67h2M82 67h2M93 67h1M109 67h2M113 67h2M13 68h1M17 68h1M29 68h1M34 68h1M45 68h1M51 68h1M54 68h1M58 68h1M74 68h2M82 68h1M109 68h1M13 69h1M18 69h1M29 69h1M34 69h1M44 69h2M52 69h2M64 69h2M70 69h1M73 69h1M75 69h1M82 69h1M112 69h2M14 70h1M18 70h1M45 70h1M52 70h3M61 70h1M73 70h1M81 70h1M92 70h1M97 70h1M108 70h1M113 70h1M14 71h2M46 71h1M53 71h3M57 71h1M62 71h1M64 71h1M74 71h1M81 71h1M92 71h1M97 71h1M108 71h2M113 71h2M14 72h1M18 72h1M30 72h1M35 72h1M45 72h2M54 72h1M56 72h2M66 72h2M69 72h3M73 72h1M92 72h1M97 72h1M108 72h2M113 72h1M14 73h1M18 73h1M30 73h1M35 73h1M46 73h1M55 73h1M57 73h2M60 73h1M62 73h1M71 73h2M80 73h1M91 73h1M108 73h2M113 73h1M14 74h1M17 74h3M30 74h1M47 74h1M57 74h4M65 74h1M68 74h1M70 74h2M79 74h1M82 74h1M91 74h1M107 74h3M112 74h2M14 75h1M19 75h1M30 75h1M47 75h2M57 75h4M62 75h1M64 75h7M79 75h1M96 75h1M108 75h2M112 75h2M14 76h2M31 76h1M48 76h2M59 76h6M66 76h3M78 76h1M96 76h1M107 76h2M112 76h1M14 77h2M18 77h2M31 77h1M50 77h1M77 77h2M90 77h1M107 77h2M20 78h1M37 78h1M76 78h1M79 78h1M95 78h1M107 78h1M112 78h1M15 79h1M20 79h1M38 79h1M51 79h2M78 79h1M89 79h1M107 79h1M20 80h2M33 80h1M39 80h1M52 80h2M73 80h1M77 80h1M88 80h1M94 80h1M106 80h2M111 80h1M16 81h1M20 81h2M39 81h2M55 81h1M71 81h2M88 81h1M93 81h1M106 81h1M110 81h1M16 82h2M20 82h2M34 82h1M40 82h1M57 82h3M68 82h2M72 82h1M93 82h1M110 82h2M16 83h2M21 83h1M41 83h1M58 83h2M61 83h1M63 83h7M86 83h1M92 83h1M105 83h1M110 83h1M18 84h1M21 84h2M35 84h1M59 84h1M85 84h1M105 84h1M109 84h1M22 85h2M36 85h1M43 85h1M84 85h1M91 85h1M104 85h2M109 85h1M23 86h1M37 86h1M44 86h1M83 86h1M90 86h1M104 86h1M109 86h1M19 87h1M23 87h2M45 87h1M82 87h1M89 87h1M103 87h1M108 87h1M18 88h2M24 88h1M26 88h1M46 88h2M80 88h1M88 88h1M103 88h1M106 88h1M108 88h1M25 89h1M39 89h2M48 89h1M79 89h1M87 89h1M101 89h2M107 89h1M25 90h2M40 90h2M49 90h2M77 90h1M86 90h1M101 90h2M106 90h1M21 91h2M26 91h1M42 91h1M52 91h1M74 91h3M85 91h1M101 91h1M21 92h2M26 92h2M43 92h1M54 92h3M73 92h1M83 92h1M100 92h1M26 93h1M45 93h1M58 93h5M64 93h3M68 93h2M82 93h1M98 93h2M104 93h2M23 94h2M27 94h4M47 94h1M80 94h1M98 94h1M103 94h1M24 95h1M30 95h2M48 95h2M78 95h2M97 95h2M102 95h2M24 96h1M30 96h1M50 96h2M76 96h1M96 96h1M103 96h1M26 97h1M31 97h2M53 97h3M72 97h4M95 97h2M101 97h1M27 98h1M32 98h2M58 98h5M64 98h1M66 98h4M71 98h1M94 98h2M100 98h1M27 99h2M33 99h1M35 99h1M92 99h3M100 99h2M28 100h1M34 100h2M37 100h1M92 100h1M97 100h1M29 101h2M35 101h1M37 101h1M91 101h2M95 101h1M97 101h1M31 102h1M37 102h2M88 102h3M93 102h1M95 102h2M32 103h2M38 103h3M86 103h4M94 103h2M33 104h2M40 104h3M84 104h1M86 104h1M93 104h2M34 105h2M43 105h3M83 105h3M91 105h2M36 106h3M43 106h1M45 106h2M80 106h4M90 106h1M37 107h2M46 107h3M50 107h1M52 107h1M78 107h3M88 107h2M39 108h3M49 108h4M54 108h1M73 108h6M87 108h2M41 109h1M43 109h1M52 109h1M54 109h4M62 109h1M64 109h1M68 109h8M85 109h1M43 110h3M56 110h10M68 110h3M82 110h2M45 111h3M80 111h1M82 111h1M48 112h3M75 112h5M51 113h1M53 113h3M63 113h2M69 113h6M76 113h2M56 114h2M61 114h7M70 114h1"/>
<path stroke="#0020ff" d="M60 15h2M63 15h5M73 15h1M52 16h8M61 16h1M63 16h10M74 16h1M47 17h3M51 17h3M55 17h7M63 17h4M68 17h3M72 17h1M75 17h4M48 18h3M53 18h3M59 18h3M64 18h1M68 18h3M72 18h9M44 19h10M75 19h2M78 19h3M82 19h2M41 20h1M43 20h7M78 20h4M83 20h2M40 21h5M46 21h1M80 21h1M82 21h1M85 21h1M87 21h1M38 22h3M42 22h3M82 22h7M38 23h4M85 23h6M35 24h4M40 24h1M87 24h6M34 25h2M37 25h1M88 25h7M32 26h4M91 26h4M32 27h4M92 27h5M30 28h2M33 28h1M94 28h1M96 28h3M29 29h3M94 29h4M28 30h5M61 30h1M94 30h5M27 31h4M56 31h2M69 31h3M97 31h1M99 31h2M26 32h4M52 32h2M72 32h1M74 32h1M97 32h5M26 33h3M77 33h1M98 33h5M24 34h4M48 34h1M64 34h2M79 34h1M99 34h4M23 35h5M56 35h2M69 35h1M71 35h1M81 35h1M100 35h4M23 36h3M53 36h1M73 36h2M82 36h1M101 36h3M22 37h5M43 37h1M51 37h1M76 37h1M102 37h3M21 38h4M42 38h1M49 38h1M78 38h1M85 38h1M102 38h4M21 39h3M47 39h1M86 39h1M103 39h4M21 40h3M81 40h1M103 40h4M19 41h4M44 41h1M88 41h1M104 41h4M20 42h2M38 42h1M43 42h1M89 42h1M105 42h4M19 43h1M21 43h1M42 43h1M90 43h1M106 43h2M19 44h3M36 44h1M41 44h1M91 44h1M106 44h3M17 45h2M86 45h2M91 45h1M107 45h3M17 46h4M60 46h2M63 46h1M66 46h1M92 46h1M106 46h4M17 47h3M34 47h1M57 47h1M70 47h1M88 47h1M93 47h1M107 47h1M109 47h1M17 48h4M38 48h1M72 48h1M89 48h1M93 48h1M108 48h3M17 49h3M53 49h1M74 49h1M89 49h1M94 49h1M108 49h3M16 50h3M90 50h1M94 50h1M108 50h4M16 51h3M32 51h1M62 51h3M91 51h1M95 51h1M109 51h1M111 51h1M15 52h2M36 52h1M58 52h1M77 52h1M95 52h1M110 52h2M15 53h3M31 53h1M78 53h1M91 53h1M109 53h3M15 54h3M31 54h1M35 54h1M48 54h1M55 54h1M109 54h1M112 54h1M15 55h3M47 55h1M73 55h1M92 55h1M96 55h1M110 55h2M15 56h1M17 56h1M34 56h1M53 56h1M96 56h1M110 56h3M15 57h2M34 57h1M52 57h1M110 57h3M14 58h4M30 58h1M46 58h1M75 58h1M110 58h3M14 59h3M51 59h1M81 59h1M93 59h1M97 59h1M110 59h1M112 59h1M14 60h3M45 60h1M51 60h1M76 60h1M93 60h1M110 60h1M112 60h1M14 61h4M111 61h2M14 62h1M16 62h1M45 62h1M97 62h1M110 62h2M14 63h3M29 63h1M76 63h1M111 63h3M14 64h3M29 64h1M111 64h3M14 65h3M29 65h1M50 65h1M110 65h1M113 65h1M14 66h2M45 66h1M112 66h1M14 67h3M30 67h1M33 67h1M45 67h1M97 67h1M111 67h2M14 68h3M76 68h1M93 68h1M97 68h1M110 68h4M14 69h4M51 69h1M81 69h1M93 69h1M97 69h1M110 69h1M15 70h3M30 70h1M34 70h1M75 70h1M110 70h3M16 71h2M30 71h1M34 71h1M52 71h1M110 71h3M15 72h3M34 72h1M53 72h1M80 72h1M110 72h3M15 73h1M17 73h1M47 73h1M54 73h1M73 73h1M92 73h1M96 73h1M110 73h3M15 74h1M31 74h1M35 74h1M55 74h1M72 74h1M92 74h1M96 74h1M110 74h2M15 75h1M17 75h2M31 75h1M35 75h1M56 75h1M78 75h1M91 75h1M110 75h1M16 76h3M36 76h1M58 76h1M95 76h1M109 76h3M16 77h2M32 77h1M36 77h2M61 77h6M76 77h1M95 77h1M109 77h3M16 78h4M32 78h1M51 78h1M75 78h1M90 78h1M94 78h1M108 78h4M16 79h4M33 79h1M74 79h1M94 79h1M108 79h1M110 79h2M16 80h4M38 80h1M54 80h1M110 80h1M17 81h3M34 81h1M56 81h1M107 81h3M111 81h1M18 82h2M60 82h2M67 82h1M87 82h1M92 82h1M106 82h4M19 83h2M35 83h1M40 83h1M106 83h4M19 84h1M36 84h1M41 84h1M86 84h1M91 84h1M106 84h3M18 85h4M42 85h1M90 85h1M106 85h3M19 86h4M38 86h1M43 86h1M89 86h1M105 86h4M20 87h3M38 87h1M44 87h1M88 87h1M104 87h2M107 87h1M20 88h4M39 88h1M81 88h1M104 88h2M107 88h1M20 89h5M47 89h1M80 89h1M86 89h1M103 89h4M21 90h4M78 90h1M85 90h1M103 90h3M23 91h3M43 91h1M50 91h2M84 91h1M102 91h1M104 91h2M23 92h3M44 92h1M53 92h1M74 92h1M101 92h5M23 93h2M27 93h1M56 93h2M70 93h2M81 93h1M100 93h4M25 94h1M48 94h1M60 94h1M62 94h1M64 94h2M79 94h1M99 94h4M25 95h5M77 95h1M99 95h3M25 96h5M52 96h2M75 96h1M97 96h6M27 97h4M56 97h1M70 97h2M97 97h4M28 98h4M63 98h1M65 98h1M96 98h1M98 98h2M29 99h4M95 99h2M98 99h2M29 100h5M93 100h4M31 101h4M93 101h2M96 101h1M32 102h5M91 102h2M94 102h1M34 103h4M90 103h1M93 103h1M35 104h5M87 104h3M91 104h2M36 105h3M41 105h2M86 105h5M39 106h4M44 106h1M84 106h1M86 106h4M39 107h3M43 107h3M81 107h7M42 108h7M79 108h3M83 108h4M42 109h1M44 109h3M50 109h2M53 109h1M76 109h9M46 110h5M52 110h4M66 110h2M71 110h7M79 110h3M48 111h5M54 111h1M56 111h11M68 111h1M70 111h2M73 111h7M51 112h6M58 112h5M65 112h10M56 113h7M65 113h4"/>
<path stroke="#002aff" d="M60 16h1M62 16h1M54 17h1M62 17h1M67 17h1M71 17h1M73 17h2M51 18h2M82 20h1M83 21h2M86 21h1M41 22h1M36 25h1M32 29h1M58 31h6M66 31h3M98 31h1M54 32h2M73 32h1M51 33h1M75 33h2M49 34h1M59 34h5M66 34h3M78 34h1M47 35h1M55 35h1M70 35h1M73 35h1M80 35h1M45 36h1M52 36h1M75 36h1M44 37h1M50 37h1M77 37h1M83 37h1M48 38h1M84 38h1M41 39h1M46 39h1M80 39h1M40 40h1M45 40h1M82 40h1M87 40h1M39 41h1M83 41h1M87 41h1M84 42h1M20 43h1M37 43h1M85 43h1M89 43h1M86 44h1M19 45h2M36 45h1M40 45h1M35 46h1M39 46h1M62 46h1M64 46h2M88 46h1M38 47h1M92 47h1M108 47h1M34 48h1M33 49h1M37 49h1M90 49h1M93 49h1M75 50h1M36 51h1M61 51h1M65 51h2M76 51h1M17 52h1M35 52h1M69 52h1M91 52h1M32 53h1M35 53h1M49 53h1M56 53h1M95 53h1M72 54h1M92 54h1M110 54h1M31 55h1M16 56h1M31 56h1M47 56h1M74 56h1M93 56h1M30 57h1M93 57h1M96 57h1M93 58h1M30 59h1M33 59h1M111 59h1M30 60h1M33 60h1M97 60h1M33 61h1M97 61h1M15 62h1M30 62h1M33 62h1M50 62h1M112 62h1M33 63h1M45 63h1M50 63h1M94 63h1M97 63h1M33 64h1M45 64h1M50 64h1M94 64h1M97 64h1M33 65h1M45 65h1M94 65h1M97 65h1M111 65h2M33 66h1M50 66h1M94 66h1M97 66h1M111 66h1M30 68h1M30 69h1M111 69h1M46 70h1M93 70h1M93 71h1M96 71h1M74 72h1M96 72h1M16 73h1M16 74h1M48 74h1M16 75h1M71 75h1M95 75h1M111 75h1M32 76h1M69 76h1M77 76h1M91 76h1M33 78h1M37 79h1M53 79h1M90 79h1M109 79h1M72 80h1M89 80h1M93 80h1M108 80h2M38 81h1M57 81h1M70 81h1M35 82h1M39 82h1M66 82h1M88 82h1M18 83h1M87 83h1M91 83h1M20 84h1M90 84h1M37 85h1M85 85h1M84 86h1M39 87h1M83 87h1M106 87h1M40 88h1M45 88h1M82 88h1M87 88h1M41 89h1M46 89h1M81 89h1M42 90h1M47 90h2M79 90h1M77 91h1M103 91h1M45 92h1M52 92h1M75 92h1M82 92h1M25 93h1M46 93h2M55 93h1M80 93h1M26 94h1M58 94h2M61 94h1M63 94h1M66 94h3M78 94h1M50 95h2M75 95h2M54 96h1M73 96h2M57 97h4M67 97h3M97 98h1M97 99h1M91 103h2M90 104h1M39 105h2M85 106h1M42 107h1M82 108h1M47 109h3M51 110h1M78 110h1M53 111h1M55 111h1M67 111h1M69 111h1M72 111h1M57 112h1M63 112h2"/>
<path stroke="#0035ff" d="M64 31h2M56 32h1M69 32h2M52 33h1M74 33h1M50 34h2M56 34h1M58 34h1M69 34h1M77 34h1M54 35h1M72 35h1M74 35h1M79 35h1M46 36h1M51 36h1M81 36h1M49 37h1M78 37h1M43 38h1M46 38h2M79 38h2M42 39h1M85 39h1M44 40h1M86 40h1M43 41h1M84 41h1M86 41h1M42 42h1M88 42h1M38 43h1M41 43h1M37 44h1M40 44h1M87 44h1M90 44h1M38 46h1M91 46h1M69 47h1M89 47h1M37 48h1M55 48h1M90 48h1M92 48h1M73 49h1M33 50h1M36 50h1M52 50h1M51 51h1M60 51h1M94 51h1M32 52h2M92 52h1M71 53h1M92 53h1M32 54h1M34 54h1M95 54h1M34 55h1M79 55h1M31 57h1M33 57h1M80 57h1M33 58h1M94 58h1M96 58h1M81 60h1M30 61h1M94 62h1M96 62h1M30 63h1M96 63h1M30 65h1M30 66h1M50 67h1M94 67h1M33 68h1M81 68h1M94 68h2M33 69h1M76 69h1M33 70h1M96 70h1M31 71h1M80 71h1M31 72h1M47 72h1M93 72h1M31 73h1M34 73h1M79 73h1M93 73h1M34 74h1M95 74h1M32 75h1M49 75h1M92 75h1M35 76h1M92 76h1M94 76h1M33 77h1M60 77h1M67 77h1M91 77h1M94 77h1M36 78h1M34 79h1M93 79h1M34 80h1M37 80h1M55 80h1M90 80h1M89 81h1M92 81h1M62 82h4M91 82h1M36 83h1M39 83h1M37 84h1M40 84h1M87 84h1M38 85h1M41 85h1M86 85h1M89 85h1M42 86h1M85 86h1M88 86h1M43 87h1M87 87h1M44 88h1M86 88h1M42 89h1M85 89h1M43 90h1M46 90h1M80 90h1M84 90h1M49 91h1M78 91h1M82 91h2M46 92h1M51 92h1M76 92h1M81 92h1M54 93h1M72 93h2M79 93h1M49 94h2M57 94h1M69 94h3M77 94h1M63 95h2M55 96h1M69 96h4M61 97h6"/>
<path stroke="#0040ff" d="M57 32h2M60 32h4M68 32h1M71 32h1M53 33h3M57 33h1M59 33h1M61 33h6M68 33h1M70 33h4M52 34h1M57 34h1M70 34h1M74 34h3M48 35h2M53 35h1M78 35h1M47 36h1M50 36h1M76 36h1M78 36h3M45 37h1M48 37h1M79 37h1M81 37h2M82 38h2M45 39h1M81 39h1M83 39h2M41 40h2M83 40h1M85 40h1M40 41h1M39 42h1M85 42h1M40 43h1M86 43h1M88 43h1M37 45h1M39 45h1M88 45h1M90 45h1M36 46h1M89 46h1M35 47h1M58 47h1M91 47h1M35 48h1M91 48h1M34 49h3M92 49h1M91 50h3M33 51h1M35 51h1M92 51h1M34 52h1M50 52h1M57 52h1M94 52h1M33 53h1M94 53h1M93 54h1M33 55h1M93 55h1M95 55h1M32 56h2M75 57h1M94 57h1M31 58h1M31 59h1M46 59h1M94 59h1M96 59h1M31 60h2M94 60h1M96 60h1M31 61h2M50 61h1M81 61h1M94 61h1M96 61h1M32 62h1M95 62h1M32 63h1M77 63h1M95 63h1M30 64h1M32 64h1M77 64h1M95 64h2M96 65h1M96 66h1M32 67h1M96 67h1M32 68h1M96 68h1M31 69h1M46 69h1M94 69h1M96 69h1M31 70h1M51 70h1M94 70h1M32 71h2M75 71h1M33 72h1M32 73h1M94 73h2M32 74h1M54 74h1M33 75h2M33 76h1M50 76h1M57 76h1M70 76h1M93 77h1M34 78h1M52 78h1M91 78h3M35 79h2M35 80h2M92 80h1M35 81h3M69 81h1M91 81h1M36 82h1M38 82h1M89 82h1M37 83h1M88 83h1M90 83h1M39 84h1M89 84h1M87 85h1M39 86h1M86 86h1M40 87h1M42 87h1M84 87h3M41 88h1M43 88h1M83 88h3M44 89h2M82 89h1M84 89h1M81 90h3M44 91h2M48 91h1M79 91h1M47 92h1M50 92h1M77 92h1M80 92h1M48 93h2M53 93h1M74 93h1M53 94h1M56 94h1M72 94h1M76 94h1M52 95h2M55 95h1M59 95h4M66 95h1M73 95h2M56 96h3M65 96h2M68 96h1"/>
<path stroke="#004aff" d="M59 32h1M64 32h4M56 33h1M58 33h1M60 33h1M67 33h1M69 33h1M53 34h3M71 34h3M50 35h3M75 35h3M48 36h1M77 36h1M46 37h2M80 37h1M44 38h2M81 38h1M43 39h2M82 39h1M43 40h1M84 40h1M41 41h2M85 41h1M40 42h2M86 42h2M39 43h1M87 43h1M38 44h2M88 44h2M89 45h1M37 46h1M90 46h1M36 47h2M90 47h1M36 48h1M71 48h1M91 49h1M34 50h2M34 51h1M67 51h1M93 51h1M93 52h1M34 53h1M93 53h1M33 54h1M54 54h1M94 54h1M32 55h1M53 55h1M94 55h1M94 56h2M32 57h1M95 57h1M32 58h1M51 58h1M95 58h1M32 59h1M76 59h1M95 59h1M95 60h1M95 61h1M31 62h1M77 62h1M31 63h1M31 64h1M31 65h2M77 65h1M95 65h1M31 66h2M77 66h1M95 66h1M31 67h1M81 67h1M95 67h1M32 69h1M95 69h1M32 70h1M95 70h1M94 71h2M32 72h1M94 72h2M33 73h1M53 73h1M33 74h1M93 74h2M93 75h2M34 76h1M93 76h1M34 77h2M51 77h1M59 77h1M92 77h1M35 78h1M73 79h1M91 79h2M91 80h1M90 81h1M37 82h1M90 82h1M38 83h1M89 83h1M38 84h1M88 84h1M39 85h2M88 85h1M40 86h2M87 86h1M41 87h1M42 88h1M43 89h1M83 89h1M44 90h2M46 91h2M80 91h2M48 92h2M78 92h2M50 93h3M75 93h1M77 93h2M51 94h2M54 94h2M73 94h2M54 95h1M57 95h2M65 95h1M67 95h6M59 96h6M67 96h1"/>
<path stroke="#0055ff" d="M49 36h1M38 45h1M54 49h1M78 54h1M48 55h1M47 57h1M31 68h1M52 72h1M55 75h1M68 77h1M71 80h1M58 81h1M76 93h1M75 94h1M56 95h1"/>
<path stroke="#0060ff" d="M59 47h1M68 47h1M56 48h1M59 51h1M70 52h1M55 53h1M52 56h1M46 60h1M50 60h1M81 62h1M81 66h1M46 68h1M50 68h1M80 70h1M48 73h1M73 74h1M78 74h1"/>
<path stroke="#006aff" d="M74 50h1M80 58h1M81 64h1M81 65h1M77 67h1M76 70h1M47 71h1M74 73h1M63 78h1M68 81h1"/>
<path stroke="#0075ff" d="M77 53h1M79 56h1M77 61h1M81 63h1M72 75h1M54 79h1"/>
<path stroke="#0080ff" d="M67 47h1M68 51h1M73 54h1M74 55h1M79 72h1M56 76h1M58 77h1M64 78h1M74 78h1M56 80h1M59 81h1"/>
<path stroke="#008aff" d="M70 48h1M75 51h1M76 52h1M76 58h1M46 67h1M51 71h1M62 78h1"/>
<path stroke="#0095ff" d="M60 47h1M72 49h1M53 50h1M49 54h1M46 61h1M75 72h1M77 75h1M65 78h1"/>
<path stroke="#009fff" d="M64 50h1M72 53h1M75 77h1"/>
<path stroke="#00aaff" d="M63 50h1M58 51h1M56 52h1M51 57h1M80 59h1M50 69h1M49 74h1M76 76h1M67 81h1"/>
<path stroke="#00b5ff" d="M62 50h1M47 58h1M50 59h1M46 62h1M77 68h1M61 78h1M72 79h1M70 80h1"/>
<path stroke="#00bfff" d="M66 47h1M57 48h1M65 50h1M75 56h1M46 66h1M47 70h1M71 76h1M69 77h1M53 78h1"/>
<path stroke="#00caff" d="M55 49h1M52 51h1M69 51h1M50 53h1M77 60h1M49 63h1M49 64h1M80 69h1M60 81h1"/>
<path stroke="#00d4ff" d="M61 47h1M65 47h1M61 50h1M46 65h1M49 65h1M53 74h1M66 78h1M66 81h1"/>
<path stroke="#00dffc" d="M51 52h1M48 56h1M79 57h1M46 63h1"/>
<path stroke="#03eaf3" d="M62 47h2M78 55h1M50 75h1M52 77h1M60 78h1"/>
<path stroke="#0cf4eb" d="M64 47h1M49 62h1M46 64h1M49 66h1M48 72h1M54 75h1M51 76h1M57 80h1"/>
<path stroke="#15ffe2" d="M66 50h1M57 77h1M55 79h1"/>
<path stroke="#1dffda" d="M69 48h1M71 52h1M76 71h1M52 73h1M78 73h1M61 81h1"/>
<path stroke="#26ffd1" d="M73 50h1M80 60h1M80 68h1M77 69h1M67 78h1"/>
<path stroke="#2effc9" d="M53 54h1M76 57h1M79 71h1"/>
<path stroke="#37ffc0" d="M52 55h1M49 67h1M62 81h1M65 81h1"/>
<path stroke="#3fffb7" d="M54 53h1M47 59h1"/>
<path stroke="#48ffaf" d="M60 50h1M77 59h1M50 70h1M55 76h1M70 77h1M63 81h1"/>
<path stroke="#51ffa6" d="M58 48h1M77 54h1M50 58h1M49 61h1M51 72h1M69 80h1M64 81h1"/>
<path stroke="#59ff9e" d="M57 51h1M47 69h1M74 74h1M73 78h1"/>
<path stroke="#62ff95" d="M71 49h1M67 50h1M49 55h1"/>
<path stroke="#6aff8d" d="M54 50h1M73 75h1M59 78h1"/>
<path stroke="#73ff84" d="M74 51h1M78 63h1"/>
<path stroke="#7bff7b" d="M55 52h1M78 64h1M78 65h1M75 73h1"/>
<path stroke="#84ff73" d="M73 53h1M51 56h1M80 61h1M77 74h1M58 80h1"/>
<path stroke="#8dff6a" d="M70 51h1M74 54h1M68 78h1"/>
<path stroke="#95ff62" d="M68 48h1M75 55h1M48 57h1M80 67h1"/>
<path stroke="#9eff59" d="M59 50h1M76 53h1"/>
<path stroke="#a6ff51" d="M56 49h1M75 52h1M49 73h1M72 76h1M71 79h1"/>
<path stroke="#afff48" d="M47 60h1M80 62h1M49 68h1M76 75h1"/>
<path stroke="#b7ff3f" d="M72 52h1M79 58h1M78 62h1M78 66h1M80 66h1M79 70h1M75 76h1"/>
<path stroke="#c0ff37" d="M53 51h1M78 56h1M48 71h1M56 77h1M74 77h1"/>
<path stroke="#c9ff2e" d="M59 48h1M49 60h1M77 70h1M54 78h1"/>
<path stroke="#d1ff26" d="M68 50h1M47 68h1M56 79h1"/>
<path stroke="#daff1d" d="M80 64h1M78 67h1M68 80h1"/>
<path stroke="#e2ff15" d="M50 54h1M76 56h1M78 61h1M80 65h1M78 72h1"/>
<path stroke="#ebff0c" d="M77 58h1M80 63h1M76 72h1"/>
<path stroke="#f3f903" d="M67 48h1M72 50h1M52 52h1M58 78h1M63 79h1M59 80h1"/>
<path stroke="#fcf000" d="M50 71h1M50 74h1"/>
<path stroke="#ffdc00" d="M53 75h1M53 77h1M64 79h1"/>
<path stroke="#ffd200" d="M51 53h1M47 67h1M49 69h1"/>
<path stroke="#ffc800" d="M60 48h1M64 49h1M70 49h1M53 53h1M47 61h1M52 74h1"/>
<path stroke="#ffbe00" d="M55 50h1M58 50h1M77 55h1M51 73h1M71 77h1M61 79h1"/>
<path stroke="#ffb500" d="M63 49h1M56 51h1M62 79h1"/>
<path stroke="#ffab00" d="M52 54h1M49 56h1M50 57h1M79 59h1M48 70h1M65 79h1"/>
<path stroke="#ffa100" d="M71 51h1M48 58h1M49 59h1M79 69h1M69 78h1M72 78h1M67 80h1"/>
<path stroke="#ff9700" d="M52 76h1M70 79h1"/>
<path stroke="#ff8d00" d="M61 48h1M66 48h1M54 76h1"/>
<path stroke="#ff8300" d="M57 49h1M61 49h2M78 60h1M48 64h1M49 70h1M51 75h1M73 76h1M57 79h1"/>
<path stroke="#ff7a00" d="M65 49h1M69 50h1M73 51h1M47 62h1M77 73h1M75 74h1"/>
<path stroke="#ff7000" d="M63 48h1M54 52h1M76 54h1M77 71h1M49 72h1M66 79h1M60 80h1"/>
<path stroke="#ff6600" d="M74 53h1M78 57h1M47 65h1M78 68h1M74 75h1M55 78h1"/>
<path stroke="#ff5c00" d="M47 63h2M48 65h1M47 66h1M78 69h1M55 77h1M61 80h1"/>
<path stroke="#ff5200" d="M51 55h1M79 60h1M76 74h1M66 80h1"/>
<path stroke="#ff4800" d="M65 48h1M66 49h1M69 49h1M75 54h1M77 57h1M47 64h1M57 78h1"/>
<path stroke="#ff3f00" d="M71 50h1M74 52h1M78 71h1M74 76h1"/>
<path stroke="#ff3500" d="M64 48h1M58 49h1M48 62h1M48 67h1M70 78h1"/>
<path stroke="#ff2b00" d="M59 49h1M52 53h1M78 59h1M48 66h1M51 74h1M67 79h1"/>
<path stroke="#ff2100" d="M73 52h1M48 59h1M53 76h1M72 77h2M64 80h1"/>
<path stroke="#ff1700" d="M62 48h1M50 55h1M48 60h1M49 71h1M50 73h1M76 73h1M56 78h1M69 79h1M63 80h1"/>
<path stroke="#f80d00" d="M56 50h2M53 52h1M49 57h1M49 58h1M78 58h1M79 65h1M79 68h1M50 72h1M65 80h1"/>
<path stroke="#ec0400" d="M70 50h1M72 51h1M50 56h1M48 61h1M79 61h1M75 75h1M54 77h1M71 78h1M58 79h3M68 79h1"/>
<path stroke="#e00000" d="M60 49h1M54 51h1M76 55h1M77 56h1M79 62h1"/>
<path stroke="#d40000" d="M55 51h1M79 67h1M48 69h1M78 70h1M77 72h1"/>
<path stroke="#c80000" d="M67 49h1M75 53h1M79 63h1M62 80h1"/>
<path stroke="#bc0000" d="M52 75h1"/>
<path stroke="#a40000" d="M79 64h1M79 66h1"/>
<path stroke="#980000" d="M68 49h1"/>
<path stroke="#8c0000" d="M51 54h1"/>
<path stroke="#800000" d="M48 68h1"/>
</g>
<!--/DATA-->
  <line x1="640.5" y1="50" x2="640.5" y2="355" stroke="#00ff00" stroke-width="3" shape-rendering="crispEdges"/>
  <line x1="291" y1="394.5" x2="602" y2="394.5" stroke="#ff0000" stroke-width="3" shape-rendering="crispEdges"/>
  <polygon points="640.5,351.9 666.1,360.1 681.9,381.5 681.9,408.1 666.1,429.5 640.5,437.7 615.0,429.5 599.2,408.1 599.2,381.5 615.0,360.1" fill="#800000" shape-rendering="crispEdges"/>
  <polygon points="641.2,356.9 663.4,364.1 677.1,383.0 677.1,406.4 663.4,425.3 641.2,432.5 619.0,425.3 605.3,406.4 605.3,383.0 619.0,364.1" fill="#696969" shape-rendering="crispEdges"/>
</svg>

<!-- status -->
<div class="abs" style="left:14px;top:756px;line-height:16px;letter-spacing:0.024px;white-space:nowrap;">Mouse Buttons: Left -- Rotation, Middle -- Zoom, Right -- Translate. Axes: X = Red; Y = Green; Z = Blue</div>
<div class="abs btn" style="left:958px;top:752px;width:25px;height:23px;">?</div>
</div>
</body>
</html>
